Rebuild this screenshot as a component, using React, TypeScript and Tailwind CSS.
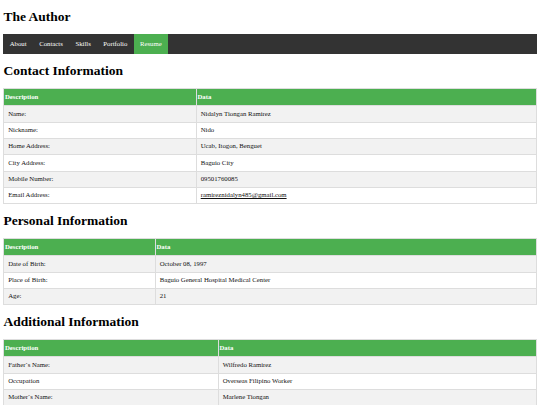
import React from 'react';

type Row = [string, React.ReactNode];

const contact: Row[] = [
  ['Name:', 'Nidalyn Tiongan Ramirez'],
  ['Nickname:', 'Nido'],
  ['Home Address:', 'Ucab, Itogon, Benguet'],
  ['City Address:', 'Baguio City'],
  ['Mobile Number:', '09501760085'],
  ['Email Address:', <a className="underline text-[#111]" href="#">ramireznidalyn485@gmail.com</a>],
];

const personal: Row[] = [
  ['Date of Birth:', 'October 08, 1997'],
  ['Place of Birth:', 'Baguio General Hospital Medical Center'],
  ['Age:', '21'],
];

const additional: Row[] = [
  ['Father`s Name:', 'Wilfredo Ramirez'],
  ['Occupation', 'Overseas Filipino Worker'],
  ['Mother`s Name:', 'Marlene Tiongan'],
];

const navItems = ['About', 'Contacts', 'Skills', 'Portfolio', 'Resume'];

function Heading({ children }: { children: React.ReactNode }) {
  return (
    <h1 className="text-[13.5px] leading-[15.5px] font-bold text-black my-[9.1px]">{children}</h1>
  );
}

function InfoTable({ rows, firstCol }: { rows: Row[]; firstCol: string }) {
  return (
    <table className="w-full border-collapse text-[6.75px] leading-none">
      <thead>
        <tr className="h-[17.5px] bg-[#4CAF50] text-white">
          <th className={`${firstCol} border border-[#ddd] text-left font-bold pl-[0.5px]`}>Description</th>
          <th className="border border-[#ddd] text-left font-bold pl-[0.5px]">Data</th>
        </tr>
      </thead>
      <tbody>
        {rows.map(([label, value], i) => (
          <tr key={i} className={`h-[16.3px] ${i % 2 === 0 ? 'bg-[#f2f2f2]' : 'bg-white'}`}>
            <td className="border border-[#ddd] pl-[3.8px] text-[#111]">{label}</td>
            <td className="border border-[#ddd] pl-[3.8px] text-[#111]">{value}</td>
          </tr>
        ))}
      </tbody>
    </table>
  );
}

export default function App() {
  return (
    <div className="w-[540px] h-[405px] overflow-hidden bg-white px-[3.4px] pt-[0.1px]" style={{ fontFamily: '"Liberation Serif", "Times New Roman", serif' }}>
      <Heading>The Author</Heading>
      <nav className="flex bg-[#333] h-[20.4px]">
        {navItems.map((item) => (
          <a
            key={item}
            href="#"
            className={`flex items-center px-[6.3px] text-[6.75px] text-white ${item === 'Resume' ? 'bg-[#4CAF50]' : ''}`}
          >
            {item}
          </a>
        ))}
      </nav>
      <Heading>Contact Information</Heading>
      <InfoTable rows={contact} firstCol="w-[192.5px]" />
      <Heading>Personal Information</Heading>
      <InfoTable rows={personal} firstCol="w-[151.5px]" />
      <Heading>Additional Information</Heading>
      <InfoTable rows={additional} firstCol="w-[214.5px]" />
    </div>
  );
}
